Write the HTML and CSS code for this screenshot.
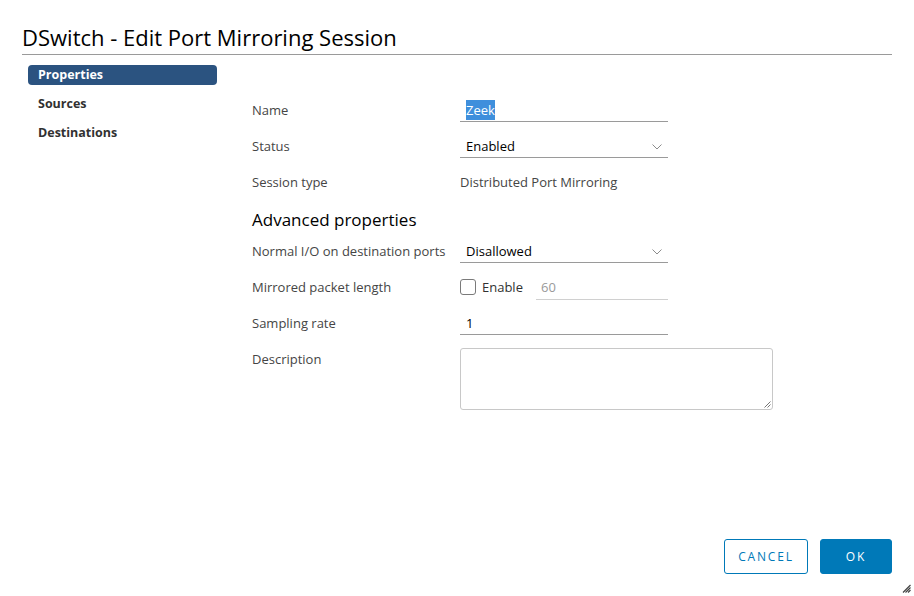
FILE: index.html
```html
<!DOCTYPE html>
<html>
<head>
<meta charset="utf-8">
<link rel="stylesheet" href="styles.css">
</head>
<body>
<div class="dialog">
  <div class="title">DSwitch - Edit Port Mirroring Session</div>
  <div class="main">
    <nav class="nav">
      <div class="nav-item active">Properties</div>
      <div class="nav-item">Sources</div>
      <div class="nav-item">Destinations</div>
    </nav>
    <div class="form">
      <div class="row">
        <div class="label">Name</div>
        <div class="field input"><span class="sel">Zeek</span></div>
      </div>
      <div class="row">
        <div class="label">Status</div>
        <div class="field input select">Enabled<svg class="chev" width="10" height="6" viewBox="0 0 10 6"><path d="M0.5 0.5 L5 5 L9.5 0.5" fill="none" stroke="#8c8c8c" stroke-width="1"/></svg></div>
      </div>
      <div class="row">
        <div class="label">Session type</div>
        <div class="field plain">Distributed Port Mirroring</div>
      </div>
      <div class="heading">Advanced properties</div>
      <div class="row">
        <div class="label">Normal I/O on destination ports</div>
        <div class="field input select">Disallowed<svg class="chev" width="10" height="6" viewBox="0 0 10 6"><path d="M0.5 0.5 L5 5 L9.5 0.5" fill="none" stroke="#8c8c8c" stroke-width="1"/></svg></div>
      </div>
      <div class="row">
        <div class="label">Mirrored packet length</div>
        <div class="field combo">
          <span class="checkbox"></span>
          <span class="cb-label">Enable</span>
          <span class="small-input">60</span>
        </div>
      </div>
      <div class="row">
        <div class="label">Sampling rate</div>
        <div class="field input">1</div>
      </div>
      <div class="row desc">
        <div class="label">Description</div>
        <div class="textarea"><svg class="grip" width="7" height="7" viewBox="0 0 7 7"><path d="M6.5 0.5 L0.5 6.5 M6.5 3.5 L3.5 6.5" stroke="#777" stroke-width="1"/></svg></div>
      </div>
    </div>
  </div>
  <div class="footer">
    <button class="btn outline">CANCEL</button>
    <button class="btn primary">OK</button>
  </div>
  <svg class="resize" width="9" height="9" viewBox="0 0 9 9"><path d="M8.5 1 L1 8.5 M8.5 3.5 L3.5 8.5 M8.5 6 L6 8.5" stroke="#444" stroke-width="1.2"/></svg>
</div>
</body>
</html>
```
FILE: styles.css
```css
html, body {
  margin: 0;
  padding: 0;
  background: #fff;
}
body {
  font-family: "Open Sans", "Lato", sans-serif;
  color: #313131;
}
.dialog {
  position: relative;
  width: 914px;
  height: 596px;
  box-sizing: border-box;
  padding: 22px 22px 0 22px;
  display: flex;
  flex-direction: column;
}
.title {
  font-size: 22px;
  line-height: 30px;
  color: #000;
  padding-bottom: 2px;
  border-bottom: 1px solid #9a9a9a;
}
.main {
  display: flex;
  flex: 1;
}
.nav {
  width: 189px;
  padding: 10px 0 0 6px;
  display: flex;
  flex-direction: column;
  gap: 9px;
}
.nav-item {
  font-size: 12.5px;
  font-weight: 700;
  line-height: 20px;
  padding-left: 10px;
  color: #313131;
}
.nav-item.active {
  background: #2b5380;
  color: #fff;
  border-radius: 4px;
}
.form {
  margin-left: 35px;
  padding-top: 46px;
  display: flex;
  flex-direction: column;
}
.row {
  display: flex;
  align-items: flex-start;
  height: 36px;
}
.label {
  width: 208px;
  font-size: 13px;
  line-height: 24px;
  color: #454545;
  margin-top: -3px;
  white-space: nowrap;
}
.field {
  width: 208px;
  box-sizing: border-box;
  font-size: 13px;
  height: 24px;
  line-height: 24px;
  margin-top: -3px;
  color: #000;
}
.input {
  padding-left: 6px;
  border-bottom: 1px solid #9a9a9a;
  position: relative;
}
.select .chev {
  position: absolute;
  right: 6px;
  top: 10px;
}
.plain {
  color: #454545;
}
.sel {
  background: #3f8fdc;
  color: #fff;
  padding: 1px 0;
}
.heading {
  font-size: 17px;
  line-height: 22px;
  color: #000;
  margin: 0 0 11px 0;
}
.combo {
  display: flex;
  align-items: center;
}
.checkbox {
  width: 14px;
  height: 14px;
  border: 1px solid #7a7a7a;
  border-radius: 3px;
  box-sizing: content-box;
}
.cb-label {
  margin-left: 6px;
  color: #313131;
}
.small-input {
  margin-left: 13px;
  flex: 1;
  padding-left: 5px;
  color: #9a9a9a;
  border-bottom: 1px solid #d0d0d0;
  height: 24px;
}
.desc {
  height: auto;
}
.textarea {
  position: relative;
  width: 313px;
  height: 62px;
  box-sizing: border-box;
  border: 1px solid #c8c8c8;
  border-radius: 3px;
  margin-top: -2px;
}
.grip {
  position: absolute;
  right: 1px;
  bottom: 1px;
}
.footer {
  display: flex;
  justify-content: flex-end;
  gap: 12px;
  padding-bottom: 22px;
}
.btn {
  height: 35px;
  border-radius: 3px;
  font-family: "Open Sans", "Lato", sans-serif;
  font-size: 12px;
  letter-spacing: 1.8px;
  font-weight: 500;
  cursor: pointer;
}
.outline {
  width: 84px;
  background: #fff;
  border: 1px solid #0079b8;
  color: #0079b8;
}
.primary {
  width: 72px;
  background: #0079b8;
  border: 1px solid #0079b8;
  color: #fff;
}
.resize {
  position: absolute;
  right: 3px;
  bottom: 3px;
}
```
